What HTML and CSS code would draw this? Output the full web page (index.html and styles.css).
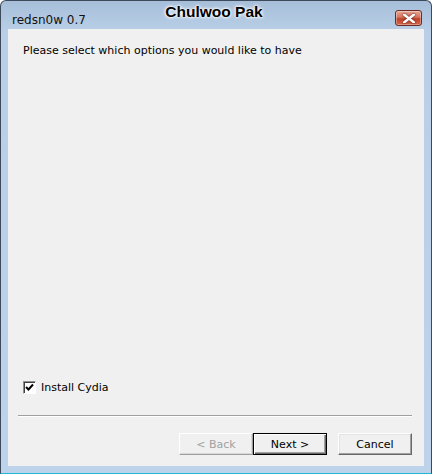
FILE: index.html
```html
<!DOCTYPE html>
<html lang="en">
<head>
  <meta charset="UTF-8">
  <title>Chulwoo Pak</title>
  <link rel="stylesheet" href="styles.css">
</head>
<body>
  <div class="window">
    <div class="titlebar">
      <span class="app-name">redsn0w 0.7</span>
      <span class="caption">Chulwoo Pak</span>
      <button class="close-btn" type="button">
        <svg width="12" height="9" viewBox="0 0 12 9">
          <path d="M1 0.5 L11 8.5 M11 0.5 L1 8.5" stroke="#fff" stroke-width="2.4" stroke-linecap="square"/>
        </svg>
      </button>
    </div>
    <div class="content">
      <p class="intro">Please select which options you would like to have</p>
      <div class="spacer"></div>
      <label class="check">
        <span class="box">
          <svg width="9" height="9" viewBox="0 0 9 9">
            <path d="M1 4 L3.5 6.5 L8 1.5" fill="none" stroke="#000" stroke-width="2"/>
          </svg>
        </span>
        Install Cydia
      </label>
      <div class="separator"></div>
      <div class="buttons">
        <button class="btn disabled" type="button">&lt; Back</button>
        <button class="btn default" type="button">Next &gt;</button>
        <button class="btn cancel" type="button">Cancel</button>
      </div>
    </div>
  </div>
</body>
</html>
```

FILE: styles.css
```css
html, body {
  margin: 0;
  padding: 0;
}

body {
  width: 432px;
  height: 474px;
  font-family: 'DejaVu Sans', sans-serif;
  font-size: 11px;
  color: #000;
  background: #fff;
}

.window {
  box-sizing: border-box;
  width: 432px;
  height: 474px;
  border: 1px solid #3d4a5c;
  border-bottom-color: #1fb7d6;
  border-radius: 6px 6px 0 0;
  background: linear-gradient(to bottom, #a7bed9 0px, #b9cfe8 30px, #bcd3eb 100%);
  padding: 0 7px 7px 7px;
  display: flex;
  flex-direction: column;
}

.titlebar {
  height: 28px;
  display: flex;
  align-items: flex-start;
  position: relative;
}

.app-name {
  font-size: 12px;
  margin: 12px 0 0 4px;
  color: #111;
}

.caption {
  position: absolute;
  left: 0;
  right: 4px;
  top: 2px;
  text-align: center;
  font-family: 'Liberation Sans', sans-serif;
  font-weight: bold;
  font-size: 15.5px;
  color: #000;
  text-shadow: 0 0 4px #fff, 0 0 3px #fff, 0 0 2px #fff;
  pointer-events: none;
}

.close-btn {
  position: absolute;
  right: 2px;
  top: 9px;
  width: 27px;
  height: 16px;
  padding: 0;
  border: 1px solid #6b2a22;
  border-radius: 3px;
  background: linear-gradient(to bottom, #e8a796 0%, #d4735f 45%, #c0402a 55%, #d2664c 100%);
  box-shadow: inset 0 0 0 1px rgba(255,255,255,0.35);
  display: flex;
  align-items: center;
  justify-content: center;
}

.close-btn svg {
  filter: drop-shadow(0 0 1px #5a1a10);
}

.content {
  flex: 1;
  background: #f0f0f0;
  display: flex;
  flex-direction: column;
  padding: 0 12px 0 10px;
}

.intro {
  margin: 15px 0 0 5px;
  font-size: 11px;
}

.spacer {
  flex: 1;
}

.check {
  display: flex;
  align-items: center;
  gap: 5px;
  margin-left: 5px;
  margin-bottom: 21px;
}

.box {
  box-sizing: border-box;
  width: 13px;
  height: 13px;
  border: 1px solid #8e8f8f;
  border-right-color: #fff;
  border-bottom-color: #fff;
  background: #fff;
  box-shadow: inset 1px 1px 0 #404040;
  display: flex;
  align-items: center;
  justify-content: center;
}

.separator {
  border-top: 1px solid #a0a0a0;
  border-bottom: 1px solid #fff;
  margin-bottom: 16px;
}

.buttons {
  display: flex;
  justify-content: flex-end;
  margin-bottom: 11px;
}

.btn {
  box-sizing: border-box;
  width: 74px;
  height: 22px;
  font-family: 'DejaVu Sans', sans-serif;
  font-size: 11px;
  background: #f0f0f0;
  border: 1px solid #fff;
  border-right-color: #696969;
  border-bottom-color: #696969;
  box-shadow: inset -1px -1px 0 #a0a0a0, inset 1px 1px 0 #e3e3e3;
  color: #000;
  padding: 0;
}

.btn.disabled {
  color: #a0a0a0;
  border-right-color: #a0a0a0;
  border-bottom-color: #a0a0a0;
  box-shadow: inset -1px -1px 0 #d8d8d8;
}

.btn.default {
  border: 1px solid #000;
  box-shadow: inset 1px 1px 0 #fff, inset -1px -1px 0 #696969, inset -2px -2px 0 #a0a0a0;
}

.btn.cancel {
  margin-left: 11px;
}
```
